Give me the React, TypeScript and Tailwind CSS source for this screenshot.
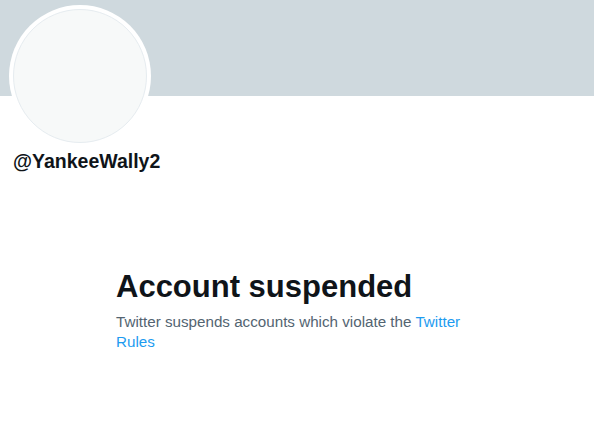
import React from 'react';

// 정지된 계정 프로필 페이지
export default function App() {
  return (
    <main className="min-h-screen w-full bg-white" style={{ fontFamily: '"Liberation Sans", Arial, sans-serif' }}>
      {/* 배너 */}
      <div className="h-[96px] w-full bg-[#cfd9de]" />

      {/* 프로필 */}
      <div className="px-[9px]">
        <div className="-mt-[91px] h-[142px] w-[142px] rounded-full bg-white p-[4px]">
          <div className="h-full w-full rounded-full border border-[#e6ecf0] bg-[#f7f9f9]" />
        </div>
        <div className="mt-[2px] pl-[4px] text-[19.5px] font-bold leading-[24px] text-[#0f1419]">@YankeeWally2</div>
      </div>

      {/* 본문 */}
      <div className="mx-auto mt-[96px] w-[362px]">
        <h1 className="text-[31px] font-bold leading-[36px] text-[#0f1419]">Account suspended</h1>
        <p className="mt-[7px] text-[15.2px] leading-[20px] text-[#536471]">
          Twitter suspends accounts which violate the{' '}
          <a href="#" className="text-[#1d9bf0]">Twitter Rules</a>
        </p>
      </div>
    </main>
  );
}
